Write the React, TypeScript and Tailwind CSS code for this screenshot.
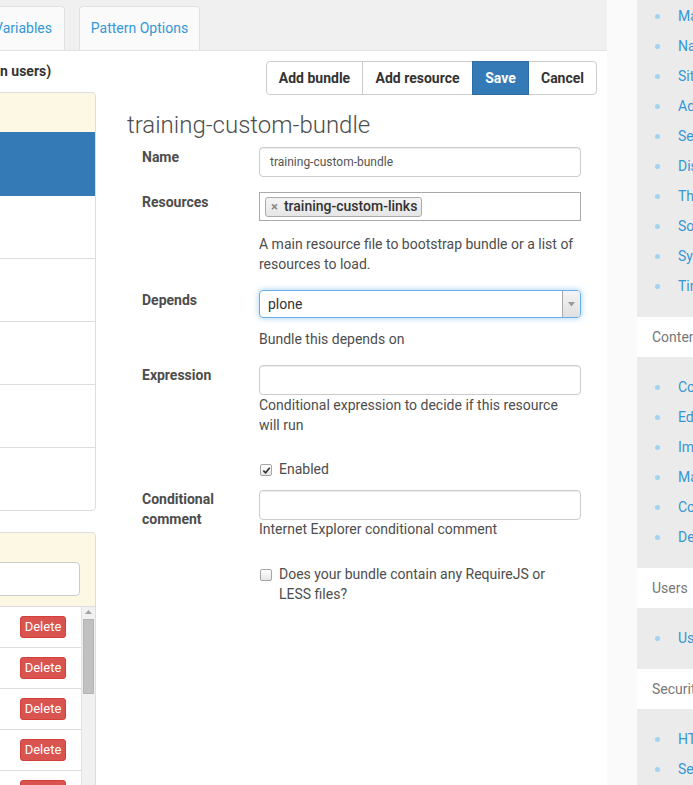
import React from "react"

const sideSections = [
    { title: "", items: ["Mail", "Navigation", "Site", "Add-ons", "Search", "Discussion", "Theming", "Social Media", "Syndication", "TinyMCE"] },
    { title: "Content", items: ["Content Rules", "Editing", "Image Handling", "Markup", "Content Settings", "Dexterity Content Types"] },
    { title: "Users", items: ["Users and Groups"] },
    { title: "Security", items: ["HTML Filtering", "Security"] },
]

function Checkbox({ checked }: { checked?: boolean }) {
    return (
        <span className="mt-[5px] w-[12px] h-[12px] shrink-0 rounded-[2px] border border-[#a6a6a6] bg-gradient-to-b from-white to-[#e6e6e6] flex items-center justify-center">
            {checked && (
                <svg width="9" height="9" viewBox="0 0 10 10">
                    <path d="M1.5 5.2 L4 7.6 L8.6 2" stroke="#333" strokeWidth="1.8" fill="none" />
                </svg>
            )}
        </span>
    )
}

function Label({ children }: { children: React.ReactNode }) {
    return <div className="text-[14px] leading-[20px] font-bold text-[#4d4d4d]">{children}</div>
}

function Help({ children, className = "" }: { children: React.ReactNode, className?: string }) {
    return <p className={"text-[14px] leading-[20px] text-[#4d4d4d] " + className}>{children}</p>
}

function Sidebar() {
    return (
        <div className="ml-[30px] flex-1 bg-[#ebebeb] overflow-hidden whitespace-nowrap">
            {sideSections.map((s, i) => (
                <div key={i}>
                    {s.title && (
                        <div className="h-[40px] bg-white flex items-center px-[15px] text-[14px] text-[#777]">{s.title}</div>
                    )}
                    <ul className={(i === 0 ? "pt-[1px]" : "pt-[15px]") + " pb-[16px]"}>
                        {s.items.map((it) => (
                            <li key={it} className="h-[30px] flex items-center pl-[18px] text-[14px] text-[#3497d6]">
                                <span className="w-[5px] h-[5px] shrink-0 rounded-full bg-[#a3d3f0] mr-[18px]"></span>
                                {it}
                            </li>
                        ))}
                    </ul>
                </div>
            ))}
        </div>
    )
}

function LeftColumn() {
    return (
        <div className="w-[96px] shrink-0 overflow-hidden">
            <div className="pt-[10px] text-[14px] leading-[20px] font-bold text-[#333] whitespace-nowrap">n users)</div>
            <div className="mt-[11px] ml-[-10px] border border-[#ddd] rounded-r-[4px] overflow-hidden">
                <div className="h-[39px] bg-[#fcf8e3]"></div>
                <div className="h-[64px] bg-[#337ab7]"></div>
                <div className="h-[63px] border-b border-[#ddd]"></div>
                <div className="h-[63px] border-b border-[#ddd]"></div>
                <div className="h-[63px] border-b border-[#ddd]"></div>
                <div className="h-[63px] border-b border-[#ddd]"></div>
                <div className="h-[62px]"></div>
            </div>
            <div className="mt-[21px] ml-[-10px] border border-[#ddd] rounded-tr-[4px] overflow-hidden">
                <div className="h-[74px] bg-[#fcf8e3] border-b border-[#ddd] pt-[29px] pr-[15px]">
                    <div className="h-[34px] bg-white border border-[#ccc] rounded-[4px]"></div>
                </div>
                <div className="flex h-[200px]">
                    <div className="flex-1">
                        {[0, 1, 2, 3, 4].map((i) => (
                            <div key={i} className="h-[41px] border-b border-[#ddd] flex items-center justify-end pr-[15px]">
                                <span className="h-[22px] w-[46px] rounded-[3px] bg-[#d9534f] border border-[#d43f3a] text-white text-[13px] flex items-center justify-center">Delete</span>
                            </div>
                        ))}
                    </div>
                    <div className="w-[14px] bg-[#f1f1f1] border-l border-[#e3e3e3] flex flex-col items-center">
                        <svg width="7" height="5" viewBox="0 0 7 5" className="mt-[3px]">
                            <path d="M3.5 0 L7 4 L0 4 Z" fill="#a3a3a3" />
                        </svg>
                        <div className="mt-[4px] w-[11px] h-[75px] bg-[#c1c1c1] border border-[#b3b3b3]"></div>
                    </div>
                </div>
            </div>
        </div>
    )
}

function Form() {
    return (
        <div className="flex-1 pt-[10px]">
            <div className="flex justify-end pr-[10px]">
                <button className="w-[97px] h-[34px] bg-white border border-[#ccc] rounded-l-[4px] text-[14px] font-bold text-[#333]">Add bundle</button>
                <button className="-ml-px w-[111px] h-[34px] bg-white border border-[#ccc] text-[14px] font-bold text-[#333]">Add resource</button>
                <button className="-ml-px z-10 w-[57px] h-[34px] bg-[#337ab7] border border-[#2e6da4] text-[14px] font-bold text-white">Save</button>
                <button className="-ml-px w-[69px] h-[34px] bg-white border border-[#ccc] rounded-r-[4px] text-[14px] font-bold text-[#333]">Cancel</button>
            </div>
            <h1 className="mt-[17px] ml-[31px] text-[24px] leading-[26px] font-light text-[#4d4d4d]">training-custom-bundle</h1>
            <div className="ml-[46px] mt-[9px] w-[439px] flex flex-col">
                <div className="grid grid-cols-[117px_322px]">
                    <Label>Name</Label>
                    <div className="h-[30px] border border-[#ccc] rounded-[4px] shadow-[inset_0_1px_1px_rgba(0,0,0,0.075)] px-[10px] flex items-center text-[12px] text-[#555]">training-custom-bundle</div>
                </div>
                <div className="grid grid-cols-[117px_322px] mt-[15px]">
                    <Label>Resources</Label>
                    <div>
                        <div className="h-[29px] border border-[#aaa] pl-[5px] flex items-center">
                            <span className="h-[20px] pl-[5px] pr-[4px] rounded-[3px] border border-[#aaa] bg-gradient-to-b from-[#f4f4f4] to-[#e6e6e6] flex items-center gap-[6px] text-[14px] font-medium text-[#333]">
                                <span className="text-[#888] text-[13px] font-bold leading-none">×</span>
                                training-custom-links
                            </span>
                        </div>
                        <Help className="mt-[13px]">A main resource file to bootstrap bundle or a list of resources to load.</Help>
                    </div>
                </div>
                <div className="grid grid-cols-[117px_322px] mt-[16px]">
                    <Label>Depends</Label>
                    <div>
                        <div className="h-[28px] border border-[#66afe9] rounded-[4px] shadow-[0_0_6px_rgba(102,175,233,0.6)] flex items-center overflow-hidden">
                            <span className="flex-1 pl-[8px] text-[14px] text-[#333]">plone</span>
                            <span className="w-[18px] h-full border-l border-[#aaa] bg-gradient-to-b from-[#f4f4f4] to-[#e0e0e0] flex items-center justify-center">
                                <svg width="7" height="5" viewBox="0 0 7 5">
                                    <path d="M0 0 L7 0 L3.5 4.5 Z" fill="#999" />
                                </svg>
                            </span>
                        </div>
                        <Help className="mt-[11px]">Bundle this depends on</Help>
                    </div>
                </div>
                <div className="grid grid-cols-[117px_322px] mt-[16px]">
                    <Label>Expression</Label>
                    <div>
                        <div className="h-[30px] border border-[#ccc] rounded-[4px] shadow-[inset_0_1px_1px_rgba(0,0,0,0.075)]"></div>
                        <Help>Conditional expression to decide if this resource will run</Help>
                    </div>
                </div>
                <div className="grid grid-cols-[117px_322px] mt-[24px]">
                    <div></div>
                    <div className="flex gap-[7px] pl-[1px]">
                        <Checkbox checked />
                        <span className="text-[14px] leading-[20px] text-[#4d4d4d]">Enabled</span>
                    </div>
                </div>
                <div className="grid grid-cols-[117px_322px] mt-[10px]">
                    <Label>Conditional<br />comment</Label>
                    <div className="pt-[1px]">
                        <div className="h-[30px] border border-[#ccc] rounded-[4px] shadow-[inset_0_1px_1px_rgba(0,0,0,0.075)]"></div>
                        <Help className="-mt-[1px]">Internet Explorer conditional comment</Help>
                    </div>
                </div>
                <div className="grid grid-cols-[117px_322px] mt-[25px]">
                    <div></div>
                    <div className="flex gap-[7px] pl-[1px]">
                        <Checkbox />
                        <span className="w-[285px] text-[14px] leading-[20px] text-[#4d4d4d]">Does your bundle contain any RequireJS or LESS files?</span>
                    </div>
                </div>
            </div>
        </div>
    )
}

export default function App() {
    return (
        <div className="w-[693px] h-[785px] overflow-hidden flex bg-[#fafafa] font-[Roboto,sans-serif]">
            <div className="w-[607px] shrink-0 flex flex-col">
                <div className="h-[51px] shrink-0 bg-[#f0f0f0] border-b border-[#e3e3e3] flex items-end gap-[14px] overflow-hidden">
                    <div className="ml-[-19px] w-[84px] h-[44px] bg-[#fafafa] border border-b-0 border-[#e0e0e0] rounded-t-[4px] flex items-center justify-end pr-[12px] text-[14px] text-[#3497d6]">Variables</div>
                    <div className="w-[121px] h-[44px] bg-[#fafafa] border border-b-0 border-[#e0e0e0] rounded-t-[4px] flex items-center justify-center text-[14px] text-[#3497d6]">Pattern Options</div>
                </div>
                <div className="flex-1 bg-white flex">
                    <LeftColumn />
                    <Form />
                </div>
            </div>
            <Sidebar />
        </div>
    )
}
